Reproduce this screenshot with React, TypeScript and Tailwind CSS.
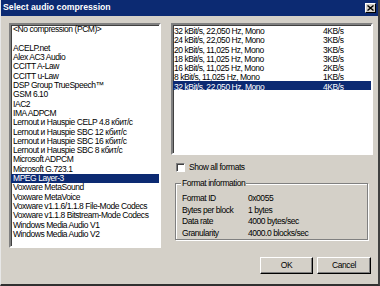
import React from 'react';

const codecs = [
  '<No compression (PCM)>',
  '',
  'ACELP.net',
  'Alex AC3 Audio',
  'CCITT A-Law',
  'CCITT u-Law',
  'DSP Group TrueSpeech™',
  'GSM 6.10',
  'IAC2',
  'IMA ADPCM',
  'Lernout и Hauspie CELP 4.8 кбит/с',
  'Lernout и Hauspie SBC 12 кбит/с',
  'Lernout и Hauspie SBC 16 кбит/с',
  'Lernout и Hauspie SBC 8 кбит/с',
  'Microsoft ADPCM',
  'Microsoft G.723.1',
  'MPEG Layer-3',
  'Voxware MetaSound',
  'Voxware MetaVoice',
  'Voxware v1.1.6/1.1.8 File-Mode Codecs',
  'Voxware v1.1.8 Bitstream-Mode Codecs',
  'Windows Media Audio V1',
  'Windows Media Audio V2',
];

const formats = [
  ['32 kBit/s, 22,050 Hz, Mono', '4KB/s'],
  ['24 kBit/s, 22,050 Hz, Mono', '3KB/s'],
  ['20 kBit/s, 11,025 Hz, Mono', '3KB/s'],
  ['18 kBit/s, 11,025 Hz, Mono', '3KB/s'],
  ['16 kBit/s, 11,025 Hz, Mono', '2KB/s'],
  ['8 kBit/s, 11,025 Hz, Mono', '1KB/s'],
  ['32 kBit/s, 22,050 Hz, Mono', '4KB/s'],
];

const info = [
  ['Format ID', '0x0055'],
  ['Bytes per block', '1 bytes'],
  ['Data rate', '4000 bytes/sec'],
  ['Granularity', '4000.0 blocks/sec'],
];

const sunken =
  'border-2 border-t-[#808080] border-l-[#808080] border-b-white border-r-white shadow-[inset_1px_1px_0_#404040] bg-white';

function Button({ label, width }: { label: string; width: string }) {
  return (
    <button
      className={`${width} h-[17px] bg-[#d4d0c8] border border-t-white border-l-white border-b-black border-r-black shadow-[inset_-1px_-1px_0_#808080] flex items-center justify-center text-black`}
    >
      {label}
    </button>
  );
}

export default function App() {
  return (
    <div
      className="w-[380px] h-[286px] bg-[#d4d0c8] flex flex-col border-l border-l-[#e8e8e8] border-r-2 border-b-2 border-r-[#404040] border-b-[#303030] text-[8.5px] tracking-[-0.45px] text-black overflow-hidden"
      style={{ fontFamily: '"Liberation Sans", Arial, sans-serif' }}
    >
      {/* Title bar */}
      <div className="h-[16px] bg-[#0c2a72] flex items-center justify-between pl-[2px] pr-[2px]">
        <span className="text-white font-bold text-[8.7px] tracking-[0px]">Select audio compression</span>
        <div className="w-[11px] h-[10px] bg-[#d4d0c8] border border-t-white border-l-white border-b-black border-r-black flex items-center justify-center">
          <svg width="7" height="6" viewBox="0 0 7 6">
            <path d="M0.5 0.5L6.5 5.5M6.5 0.5L0.5 5.5" stroke="black" strokeWidth="1.4" />
          </svg>
        </div>
      </div>

      <div className="flex gap-[10px] pl-[8px] pt-[7px]">
        {/* Codec list */}
        <div className={`${sunken} w-[152px] h-[225px] flex flex-col overflow-hidden`}>
          {codecs.map((c, i) => (
            <div
              key={i}
              className={`h-[9.3px] shrink-0 pl-[2px] flex items-center whitespace-nowrap ${
                i === 16 ? 'bg-[#0c2a72] text-white' : ''
              }`}
            >
              {c}
            </div>
          ))}
        </div>

        {/* Right column */}
        <div className="w-[202px] flex flex-col">
          <div className={`${sunken} h-[132px] flex flex-col`}>
            {formats.map(([f, r], i) => (
              <div
                key={i}
                className={`h-[9.3px] shrink-0 pl-[1px] grid grid-cols-[149px_1fr] items-center whitespace-nowrap ${
                  i === 6 ? 'bg-[#0c2a72] text-white' : ''
                }`}
              >
                <span>{f}</span>
                <span>{r}</span>
              </div>
            ))}
          </div>

          <div className="mt-[8px] ml-[5px] flex items-center gap-[4px] h-[9px]">
            <div className="w-[9px] h-[9px] border border-t-[#808080] border-l-[#808080] border-b-white border-r-white bg-white shadow-[inset_1px_1px_0_#404040]" />
            <span>Show all formats</span>
          </div>

          <div className="relative mt-[11px] ml-[4px] w-[193px] h-[57px] border border-[#808080] shadow-[inset_1px_1px_0_white,1px_1px_0_white] pt-[8px] pl-[6px]">
            <span className="absolute -top-[6px] left-[5px] px-[1px] bg-[#d4d0c8] leading-[10px]">Format information</span>
            {info.map(([k, v]) => (
              <div key={k} className="h-[11.5px] grid grid-cols-[66px_1fr] items-center whitespace-nowrap">
                <span>{k}</span>
                <span>{v}</span>
              </div>
            ))}
          </div>

          <div className="mt-[17px] pr-[2px] flex justify-end gap-[4px]">
            <Button label="OK" width="w-[53px]" />
            <Button label="Cancel" width="w-[54px]" />
          </div>
        </div>
      </div>
    </div>
  );
}
